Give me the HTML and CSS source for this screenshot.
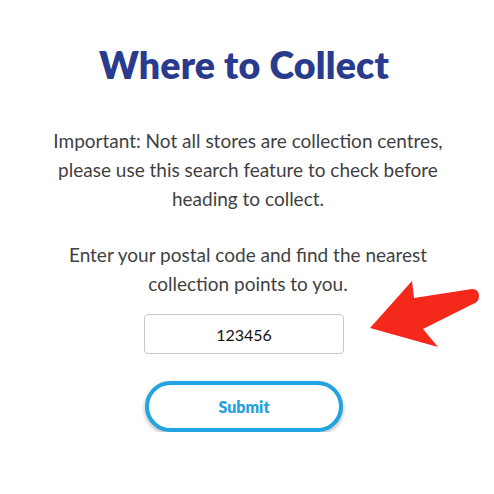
FILE: index.html
```html
<!DOCTYPE html>
<html>
<head>
<meta charset="utf-8">
<link rel="stylesheet" href="styles.css">
</head>
<body>
<main class="page">
  <h1 class="title">Where to Collect</h1>
  <p class="note">Important: Not all stores are collection centres, please use this search feature to check before heading to collect.</p>
  <p class="prompt">Enter your postal code and find the nearest collection points to you.</p>
  <div class="field-row">
    <input class="postal" type="text" value="123456">
    <svg class="arrow" width="120" height="80" viewBox="360 272 120 80">
      <path d="M367 326 L409 279 L411 296 L469 287 Q476 287 476 294 Q476 300 470 302 L420 327 L435 345 Z" fill="#f4291c"/>
    </svg>
  </div>
  <button class="submit">Submit</button>
</main>
</body>
</html>
```
FILE: styles.css
```css
html, body {
  margin: 0;
  padding: 0;
  background: #ffffff;
}
.page {
  width: 488px;
  display: flex;
  flex-direction: column;
  align-items: center;
  font-family: "Lato", "Noto Sans", sans-serif;
}
.title {
  margin: 43px 0 0;
  font-size: 37.5px;
  line-height: 44px;
  font-weight: 800;
  color: #293b8c;
  letter-spacing: 0.2px;
}
.note, .prompt {
  margin: 0 0 0 8px;
  text-align: center;
  font-size: 19px;
  line-height: 29px;
  color: #3f3f42;
  width: 420px;
}
.note {
  margin-top: 39px;
}
.prompt {
  margin-top: 27px;
}
.field-row {
  position: relative;
  margin-top: 16px;
  width: 200px;
  height: 40px;
}
.postal {
  box-sizing: border-box;
  width: 200px;
  height: 40px;
  border: 1px solid #c8c8c8;
  border-radius: 4px;
  text-align: center;
  font-family: "Lato", sans-serif;
  font-size: 16px;
  color: #111;
  padding: 0;
}
.arrow {
  position: absolute;
  left: 219px;
  top: -40px;
}
.submit {
  margin-top: 27px;
  width: 198px;
  height: 51px;
  box-sizing: border-box;
  border: 4px solid #22a4e2;
  border-radius: 26px;
  background: #fff;
  color: #2aa1dc;
  font-family: "Lato", sans-serif;
  font-weight: 800;
  font-size: 16px;
  box-shadow: 0 2px 4px rgba(0,0,0,0.3);
}
```
